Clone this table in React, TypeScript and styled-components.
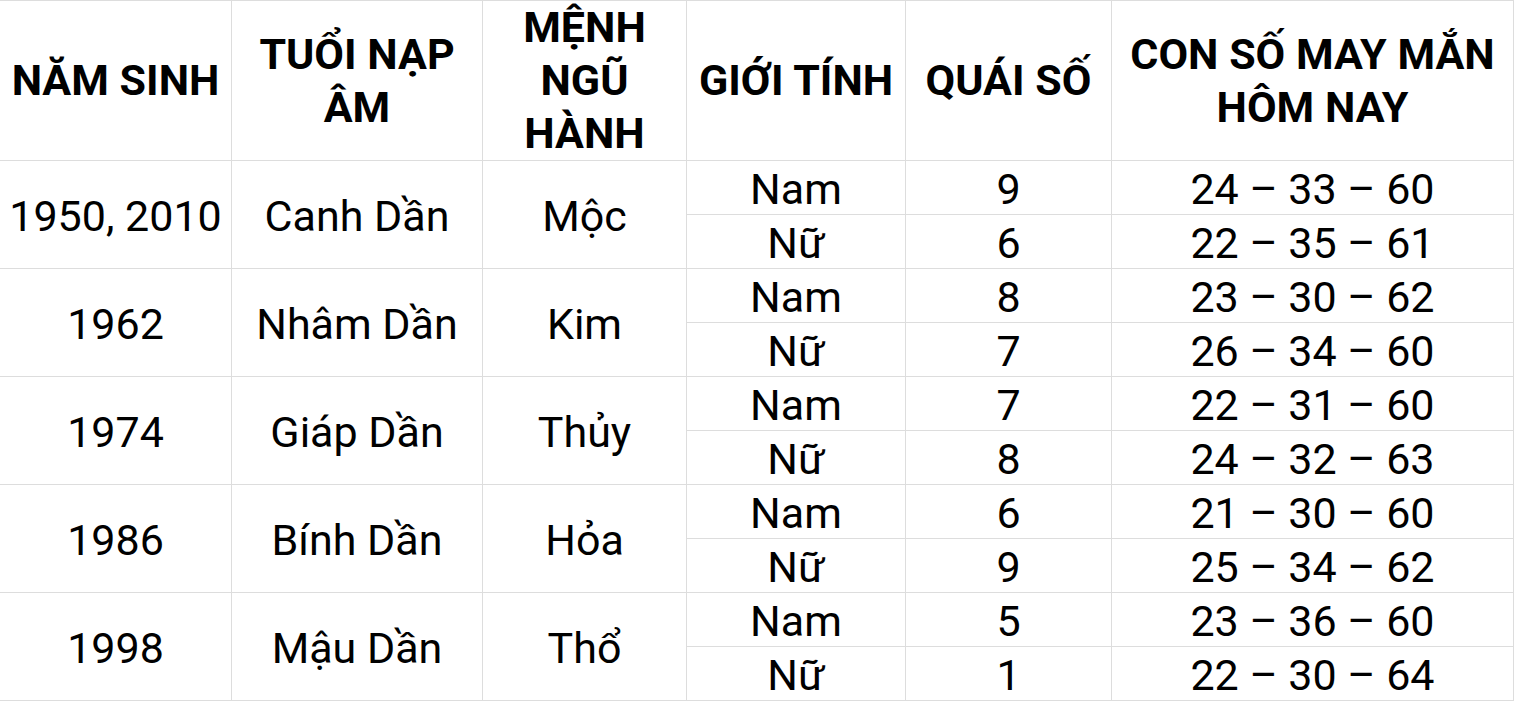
import React from "react";
import styled, { createGlobalStyle } from "styled-components";

const GlobalStyle = createGlobalStyle`
  html, body {
    margin: 0;
    padding: 0;
    background: #ffffff;
  }
  body {
    font-family: Roboto, "Noto Sans", "Liberation Sans", sans-serif;
    color: #000000;
  }
`;

const Table = styled.table`
  border-collapse: collapse;
  table-layout: fixed;
  width: 1514px;
  margin-left: -1px;
  font-family: Roboto, "Noto Sans", "Liberation Sans", sans-serif;
`;

const HeadCell = styled.th`
  border: 1px solid #dddddd;
  height: 159px;
  padding: 0 2px;
  font-size: 43px;
  font-weight: 700;
  line-height: 53px;
  text-align: center;
  vertical-align: middle;
`;

const Cell = styled.td<{ $tall?: boolean }>`
  border: 1px solid #dddddd;
  height: ${(p) => (p.$tall ? 104 : 50)}px;
  padding: 3px 2px 0;
  font-size: 43px;
  font-weight: 400;
  line-height: 50px;
  text-align: center;
  vertical-align: middle;
  white-space: nowrap;
`;

type Group = {
  year: string;
  tuoi: string;
  menh: string;
  rows: { sex: string; quai: string; lucky: string }[];
};

const groups: Group[] = [
  {
    year: "1950, 2010",
    tuoi: "Canh Dần",
    menh: "Mộc",
    rows: [
      { sex: "Nam", quai: "9", lucky: "24 – 33 – 60" },
      { sex: "Nữ", quai: "6", lucky: "22 – 35 – 61" },
    ],
  },
  {
    year: "1962",
    tuoi: "Nhâm Dần",
    menh: "Kim",
    rows: [
      { sex: "Nam", quai: "8", lucky: "23 – 30 – 62" },
      { sex: "Nữ", quai: "7", lucky: "26 – 34 – 60" },
    ],
  },
  {
    year: "1974",
    tuoi: "Giáp Dần",
    menh: "Thủy",
    rows: [
      { sex: "Nam", quai: "7", lucky: "22 – 31 – 60" },
      { sex: "Nữ", quai: "8", lucky: "24 – 32 – 63" },
    ],
  },
  {
    year: "1986",
    tuoi: "Bính Dần",
    menh: "Hỏa",
    rows: [
      { sex: "Nam", quai: "6", lucky: "21 – 30 – 60" },
      { sex: "Nữ", quai: "9", lucky: "25 – 34 – 62" },
    ],
  },
  {
    year: "1998",
    tuoi: "Mậu Dần",
    menh: "Thổ",
    rows: [
      { sex: "Nam", quai: "5", lucky: "23 – 36 – 60" },
      { sex: "Nữ", quai: "1", lucky: "22 – 30 – 64" },
    ],
  },
];

const widths = [232, 251, 204, 219, 206, 402];

export default function App() {
  return (
    <>
      <GlobalStyle />
      <Table>
        <colgroup>
          {widths.map((w, i) => (
            <col key={i} style={{ width: w }} />
          ))}
        </colgroup>
        <thead>
          <tr>
            <HeadCell>NĂM SINH</HeadCell>
            <HeadCell>
              TUỔI NẠP
              <br />
              ÂM
            </HeadCell>
            <HeadCell>
              MỆNH
              <br />
              NGŨ
              <br />
              HÀNH
            </HeadCell>
            <HeadCell>GIỚI TÍNH</HeadCell>
            <HeadCell>QUÁI SỐ</HeadCell>
            <HeadCell>
              CON SỐ MAY MẮN
              <br />
              HÔM NAY
            </HeadCell>
          </tr>
        </thead>
        <tbody>
          {groups.map((g) =>
            g.rows.map((r, i) => (
              <tr key={g.year + r.sex}>
                {i === 0 && (
                  <>
                    <Cell rowSpan={2} $tall>
                      {g.year}
                    </Cell>
                    <Cell rowSpan={2} $tall>
                      {g.tuoi}
                    </Cell>
                    <Cell rowSpan={2} $tall>
                      {g.menh}
                    </Cell>
                  </>
                )}
                <Cell>{r.sex}</Cell>
                <Cell>{r.quai}</Cell>
                <Cell>{r.lucky}</Cell>
              </tr>
            ))
          )}
        </tbody>
      </Table>
    </>
  );
}
